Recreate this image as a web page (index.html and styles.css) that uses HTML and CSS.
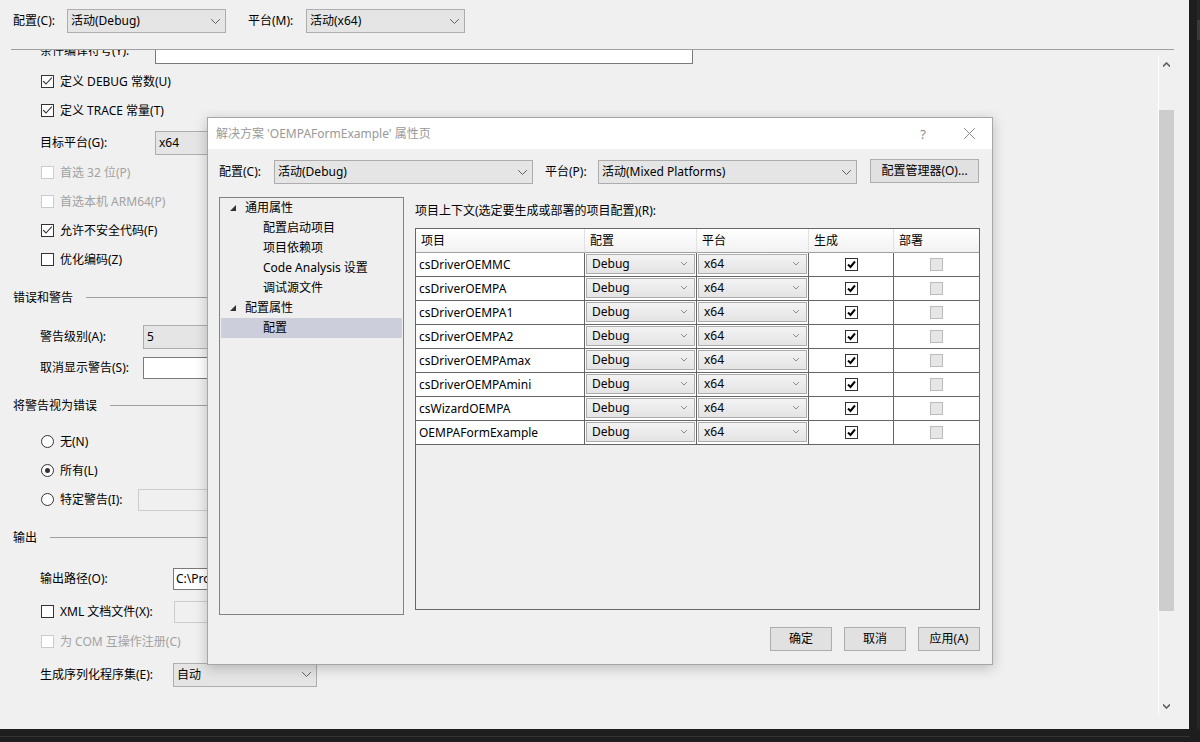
FILE: index.html
```html
<!DOCTYPE html>
<html>
<head>
  <meta charset="utf-8">
  <link rel="stylesheet" href="styles.css">
</head>
<body>
  <div class="window">
	<div class="workspace">
	  <div class="config-bar">
		<span class="bar-label">配置(C):</span>
		<div class="combo bar-combo">活动(Debug)<svg class="chev" width="9" height="5" viewBox="0 0 9 5"><polyline points="0.5,0.5 4.5,4.5 8.5,0.5"/></svg></div>
		<span class="bar-label platform">平台(M):</span>
		<div class="combo bar-combo">活动(x64)<svg class="chev" width="9" height="5" viewBox="0 0 9 5"><polyline points="0.5,0.5 4.5,4.5 8.5,0.5"/></svg></div>
	  </div>

	  <div class="page">
		<div class="page-scroll">
		  <div class="prop-list">
			<div class="row field build symbols">
			  <span class="field-label">条件编译符号(Y):</span>
			  <div class="textbox"></div>
			</div>
			<div class="row check-row"><span class="check"><svg width="11" height="11" viewBox="0 0 11 11"><polyline points="1.5,5.5 4,8 9.5,2"/></svg></span>定义 DEBUG 常数(U)</div>
			<div class="row check-row"><span class="check"><svg width="11" height="11" viewBox="0 0 11 11"><polyline points="1.5,5.5 4,8 9.5,2"/></svg></span>定义 TRACE 常量(T)</div>
			<div class="row field build target">
			  <span class="field-label">目标平台(G):</span>
			  <div class="combo field-combo">x64</div>
			</div>
			<div class="row check-row disabled nudge"><span class="check"></span>首选 32 位(P)</div>
			<div class="row check-row disabled"><span class="check"></span>首选本机 ARM64(P)</div>
			<div class="row check-row"><span class="check"><svg width="11" height="11" viewBox="0 0 11 11"><polyline points="1.5,5.5 4,8 9.5,2"/></svg></span>允许不安全代码(F)</div>
			<div class="row check-row"><span class="check"></span>优化编码(Z)</div>

			<div class="row section">错误和警告</div>
			<div class="row field errors first">
			  <span class="field-label">警告级别(A):</span>
			  <div class="combo field-combo">5</div>
			</div>
			<div class="row field errors nudge2">
			  <span class="field-label">取消显示警告(S):</span>
			  <div class="textbox"></div>
			</div>

			<div class="row section">将警告视为错误</div>
			<div class="row check-row radio-first"><span class="radio"></span>无(N)</div>
			<div class="row check-row"><span class="radio on"></span>所有(L)</div>
			<div class="row check-row treat">
			  <span class="radio"></span><span class="field-label">特定警告(I):</span>
			  <div class="textbox off"></div>
			</div>

			<div class="row section">输出</div>
			<div class="row field output output-first">
			  <span class="field-label">输出路径(O):</span>
			  <div class="textbox">C:\Program Files\OEMPA\bin\x64\Debug\</div>
			</div>
			<div class="row check-row output xml">
			  <span class="check"></span><span class="field-label">XML 文档文件(X):</span>
			  <div class="textbox off"></div>
			</div>
			<div class="row check-row disabled nudge"><span class="check"></span>为 COM 互操作注册(C)</div>
			<div class="row field output serial">
			  <span class="field-label">生成序列化程序集(E):</span>
			  <div class="combo serial-combo">自动<svg class="chev" width="9" height="5" viewBox="0 0 9 5"><polyline points="0.5,0.5 4.5,4.5 8.5,0.5"/></svg></div>
			</div>
		  </div>
		</div>

		<div class="scrollbar">
		  <div class="scroll-btn"><svg width="7" height="5" viewBox="0 0 7 5"><polyline points="0.5,4 3.5,1 6.5,4"/></svg></div>
		  <div class="scroll-track"><div class="thumb"></div></div>
		  <div class="scroll-btn"><svg width="7" height="5" viewBox="0 0 7 5"><polyline points="0.5,1 3.5,4 6.5,1"/></svg></div>
		</div>
	  </div>
	</div>
	<div class="frame-edge"><div class="edge-tab"></div></div>
  </div>
  <div class="status-edge"></div>

  <div class="dialog">
	<div class="dialog-title">
	  <span>解决方案 'OEMPAFormExample' 属性页</span>
	  <span class="title-btn help">?</span>
	  <span class="title-btn"><svg width="11" height="11" viewBox="0 0 11 11"><line x1="0.5" y1="0.5" x2="10.5" y2="10.5"/><line x1="10.5" y1="0.5" x2="0.5" y2="10.5"/></svg></span>
	</div>

	<div class="dialog-body">
	  <div class="dlg-config">
		<span class="dlg-label">配置(C):</span>
		<div class="combo dlg-combo">活动(Debug)<svg class="chev" width="9" height="5" viewBox="0 0 9 5"><polyline points="0.5,0.5 4.5,4.5 8.5,0.5"/></svg></div>
		<span class="dlg-label platform">平台(P):</span>
		<div class="combo dlg-combo">活动(Mixed Platforms)<svg class="chev" width="9" height="5" viewBox="0 0 9 5"><polyline points="0.5,0.5 4.5,4.5 8.5,0.5"/></svg></div>
		<div class="button manager">配置管理器(O)...</div>
	  </div>

	  <div class="dlg-main">
		<div class="tree">
		  <div class="tree-group"><svg width="6" height="6" viewBox="0 0 6 6"><polygon points="6,0 6,6 0,6"/></svg>通用属性</div>
		  <div class="tree-item">配置启动项目</div>
		  <div class="tree-item">项目依赖项</div>
		  <div class="tree-item">Code Analysis 设置</div>
		  <div class="tree-item">调试源文件</div>
		  <div class="tree-group"><svg width="6" height="6" viewBox="0 0 6 6"><polygon points="6,0 6,6 0,6"/></svg>配置属性</div>
		  <div class="tree-item selected">配置</div>
		</div>

		<div class="context">
		  <div class="context-label">项目上下文(选定要生成或部署的项目配置)(R):</div>
		  <div class="proj-table" id="projTable">
			<div class="proj-head">
			  <div>项目</div><div>配置</div><div>平台</div><div>生成</div><div>部署</div>
			</div>
		  </div>
		</div>
	  </div>

	  <div class="dlg-buttons">
		<div class="button">确定</div>
		<div class="button">取消</div>
		<div class="button">应用(A)</div>
	  </div>
	</div>
  </div>

  <script>
	const projects = [
	  'csDriverOEMMC',
	  'csDriverOEMPA',
	  'csDriverOEMPA1',
	  'csDriverOEMPA2',
	  'csDriverOEMPAmax',
	  'csDriverOEMPAmini',
	  'csWizardOEMPA',
	  'OEMPAFormExample'
	];

	const miniChev = '<svg width="6" height="4" viewBox="0 0 6 4"><polyline points="0.5,0.5 3,3 5.5,0.5"/></svg>';
	const tick = '<svg width="11" height="11" viewBox="0 0 11 11"><polyline points="2,5.5 4.5,8 9,2.5"/></svg>';
	const table = document.getElementById('projTable');

	projects.forEach(name => {
	  const row = document.createElement('div');
	  row.className = 'proj-row';
	  row.innerHTML =
		`<div class="cell-name">${name}</div>` +
		`<div class="cell-combo"><div class="mini-combo">Debug${miniChev}</div></div>` +
		`<div class="cell-combo"><div class="mini-combo">x64${miniChev}</div></div>` +
		`<div class="cell-check"><span class="tick">${tick}</span></div>` +
		`<div class="cell-check"><span class="tick off"></span></div>`;
	  table.appendChild(row);
	});
  </script>
</body>
</html>
```

FILE: styles.css
```css
* {
  box-sizing: border-box;
}

html, body {
  margin: 0;
  padding: 0;
  width: 1200px;
  height: 742px;
  overflow: hidden;
}

body {
  position: relative;
  background: #1e1e1e;
  font-family: "Noto Sans", "Noto Sans CJK SC", sans-serif;
  font-size: 12px;
  line-height: 16px;
  color: #000;
}

svg polyline, svg line {
  fill: none;
  stroke-linecap: square;
}

/* outer frame */

.window {
  display: flex;
  height: 729px;
}

.workspace {
  width: 1189px;
  background: #f0f0f0;
  display: flex;
  flex-direction: column;
}

.frame-edge {
  flex: 1;
  background: #1e1e1e;
  border-right: 3px solid #262626;
  position: relative;
}

.edge-tab {
  position: absolute;
  right: -3px;
  top: 20px;
  width: 3px;
  height: 20px;
  background: #3a3a3a;
}

.status-edge {
  height: 13px;
  background: #1e1e1e;
  position: relative;
}

.status-edge::after {
  content: "";
  position: absolute;
  left: 0;
  top: 7px;
  width: 1190px;
  height: 1px;
  background: #343434;
}

/* configuration bar */

.config-bar {
  height: 50px;
  margin: 0 15px 0 11px;
  padding: 9px 0 0 2px;
  border-bottom: 1px solid #a0a0a0;
  display: flex;
  align-items: flex-start;
}

.bar-label {
  width: 54px;
  line-height: 24px;
}

.bar-label.platform {
  width: 58px;
  margin-left: 22px;
}

.combo {
  height: 24px;
  border: 1px solid #adadad;
  background: #e5e5e5;
  display: flex;
  align-items: center;
  padding-left: 3px;
  white-space: nowrap;
  overflow: hidden;
  flex-shrink: 0;
}

.combo .chev {
  margin-left: auto;
  margin-right: 5px;
  flex-shrink: 0;
}

.chev polyline {
  stroke: #606060;
  stroke-width: 1;
}

.bar-combo {
  width: 159px;
}

/* property page */

.page {
  flex: 1;
  display: flex;
  margin-right: 15px;
  min-height: 0;
}

.page-scroll {
  flex: 1;
  overflow: hidden;
}

.prop-list {
  margin-top: -12px;
  padding: 0 0 0 13px;
  width: 693px;
}

.row {
  height: 29px;
  display: flex;
  align-items: center;
  white-space: nowrap;
}

.row.target { margin-top: 3px; }
.row.nudge { margin-top: 1px; }
.row.nudge2 { margin-top: 2px; }
.row.first { margin-top: 10px; }
.row.radio-first { margin-top: 7px; }
.row.output-first { margin-top: 12px; }
.row.xml { margin-top: 4px; }
.row.serial { margin-top: 4px; }

/* the label above the clipped edge sits a little higher than its box */
.symbols .field-label {
  margin-bottom: 3px;
}

.section {
  margin-top: 9px;
}

.section::after {
  content: "";
  flex: 1;
  margin-left: 13px;
  border-top: 1px solid #a0a0a0;
}

.field {
  padding-left: 27px;
}

.check-row {
  padding-left: 28px;
}

.field-label {
  flex-shrink: 0;
}

.check, .radio {
  width: 13px;
  height: 13px;
  border: 1px solid #333;
  background: #fff;
  margin-right: 6px;
  display: flex;
  align-items: center;
  justify-content: center;
  flex-shrink: 0;
}

.check polyline {
  stroke: #333;
  stroke-width: 1.1;
}

.radio {
  border-radius: 50%;
}

.radio.on::after {
  content: "";
  width: 5px;
  height: 5px;
  border-radius: 50%;
  background: #333;
}

.disabled {
  color: #a2a2a2;
}

.disabled .check {
  border-color: #cccccc;
}

.textbox {
  flex: 1;
  height: 22px;
  border: 1px solid #7a7a7a;
  background: #fff;
  padding: 2px 2px 0;
  white-space: nowrap;
  overflow: hidden;
}

.textbox.off {
  border-color: #cccccc;
  background: #f0f0f0;
}

.field-combo {
  flex: 1;
}

.build .field-label { width: 115px; }
.errors .field-label { width: 103px; }
.treat .field-label { width: 78px; }
.output .field-label { width: 133px; }
.output.xml .field-label { width: 114px; }

.serial-combo {
  width: 144px;
}

/* scrollbar */

.scrollbar {
  width: 16px;
  margin: 6px 0 14px;
  border-left: 1px solid #fff;
  display: flex;
  flex-direction: column;
}

.scroll-btn {
  height: 17px;
  display: flex;
  align-items: center;
  justify-content: center;
}

.scroll-btn polyline {
  stroke: #606060;
  stroke-width: 1.6;
}

.scroll-track {
  flex: 1;
}

.thumb {
  margin-top: 37px;
  height: 501px;
  background: #cdcdcd;
}

/* dialog */

.dialog {
  position: absolute;
  left: 207px;
  top: 117px;
  width: 786px;
  height: 548px;
  border: 1px solid #a6a6a6;
  background: #f0f0f0;
  box-shadow: 0 3px 12px rgba(0, 0, 0, 0.22);
  display: flex;
  flex-direction: column;
}

.dialog-title {
  height: 31px;
  background: #fff;
  display: flex;
  align-items: center;
  padding-left: 8px;
  color: #999;
  flex-shrink: 0;
}

.title-btn {
  width: 46px;
  height: 30px;
  display: flex;
  align-items: center;
  justify-content: center;
}

.title-btn.help {
  margin-left: auto;
  font-size: 13px;
  color: #8a8a8a;
}

.title-btn line {
  stroke: #8a8a8a;
  stroke-width: 1;
}

.dialog-body {
  flex: 1;
  padding: 11px 12px 0 11px;
  display: flex;
  flex-direction: column;
}

.dlg-config {
  display: flex;
  align-items: center;
  height: 24px;
}

.dlg-label {
  width: 55px;
}

.dlg-label.platform {
  width: 53px;
  margin-left: 12px;
}

.dlg-combo {
  width: 259px;
}

.button {
  height: 24px;
  width: 62px;
  border: 1px solid #adadad;
  background: #e1e1e1;
  display: flex;
  align-items: center;
  justify-content: center;
  white-space: nowrap;
}

.button.manager {
  width: 109px;
  margin-left: 13px;
  margin-top: -2px;
}

.dlg-main {
  display: flex;
  align-items: flex-start;
  margin-top: 13px;
}

.tree {
  width: 185px;
  height: 418px;
  border: 1px solid #828282;
  background: #efefef;
}

.tree-group, .tree-item {
  height: 20px;
  display: flex;
  align-items: center;
  margin: 0 1px;
  white-space: nowrap;
}

.tree-group {
  padding-left: 9px;
}

.tree-group svg {
  margin-right: 9px;
  fill: #333;
}

.tree-item {
  padding-left: 42px;
}

.tree-item.selected {
  background: #cccedb;
}

.context {
  flex: 1;
  margin-left: 11px;
}

.context-label {
  margin-top: 6px;
  white-space: nowrap;
}

.proj-table {
  margin-top: 9px;
  height: 382px;
  border: 1px solid #666;
  background: #efefef;
}

.proj-head, .proj-row {
  display: grid;
  grid-template-columns: 169px 112px 112px 85px 1fr;
  height: 24px;
}

.proj-head > div {
  background: linear-gradient(#ffffff, #f2f2f2);
  border-right: 1px solid #e2e2e2;
  border-bottom: 1px solid #a0a0a0;
  padding: 4px 0 0 5px;
}

.proj-row > div {
  background: #fff;
  border-right: 1px solid #646464;
  border-bottom: 1px solid #646464;
}

.proj-row > div:last-child, .proj-head > div:last-child {
  border-right: none;
}

.cell-name {
  padding: 4px 0 0 3px;
  white-space: nowrap;
}

.cell-combo {
  padding: 1px 1px 0 1px;
}

.mini-combo {
  height: 20px;
  border: 1px solid #adadad;
  background: linear-gradient(#f3f3f3, #e4e4e4);
  display: flex;
  align-items: center;
  padding-left: 5px;
}

.mini-combo svg {
  margin-left: auto;
  margin-right: 7px;
}

.mini-combo polyline {
  stroke: #8a8a8a;
  stroke-width: 1;
}

.cell-check {
  display: flex;
  align-items: center;
  justify-content: center;
}

.tick {
  width: 13px;
  height: 13px;
  border: 1px solid #333;
  background: #fff;
  display: flex;
  align-items: center;
  justify-content: center;
}

.tick polyline {
  stroke: #000;
  stroke-width: 2;
  stroke-linecap: butt;
}

.tick.off {
  border-color: #bcbcbc;
  background: #e6e6e6;
}

.dlg-buttons {
  display: flex;
  justify-content: flex-end;
  gap: 12px;
  margin-top: 12px;
}
```
